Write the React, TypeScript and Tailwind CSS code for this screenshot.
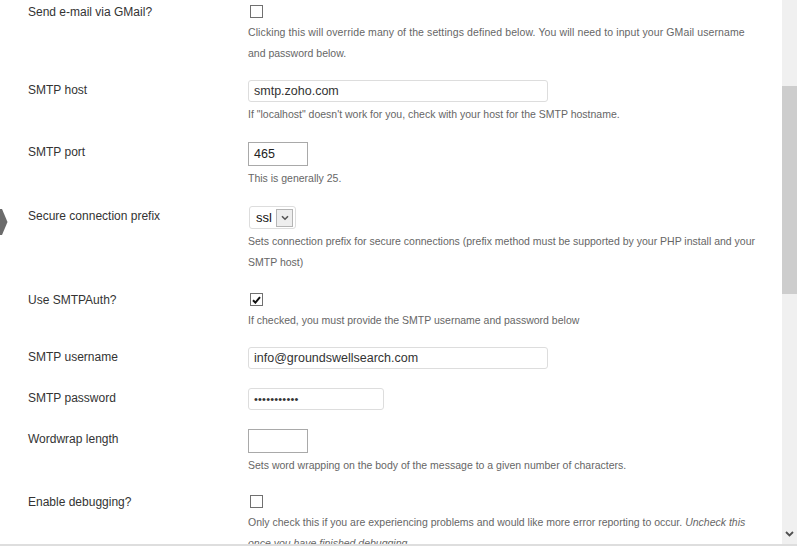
import React from "react";

function Checkbox({ checked = false }: { checked?: boolean }) {
  return (
    <div className="mt-[3px] ml-[2px] w-[13px] h-[13px] border border-[#707070] bg-white flex items-center justify-center">
      {checked && (
        <svg width="9" height="8" viewBox="0 0 9 8">
          <path d="M1 4.2 L3.4 6.6 L8 1.2" fill="none" stroke="#111" strokeWidth="2" />
        </svg>
      )}
    </div>
  );
}

function TextBox({ value, width }: { value?: string; width: string }) {
  return (
    <div className={`${width} h-[22px] border border-[#dddddd] rounded-[3px] bg-white pl-[5px] flex items-center text-[12.5px] text-[#333]`}>
      {value}
    </div>
  );
}

function SmallBox({ value }: { value?: string }) {
  return (
    <div className="w-[60px] h-[24px] border border-[#a9a9a9] bg-white pl-[5px] flex items-center text-[12.5px] text-[#222]">
      {value}
    </div>
  );
}

function Desc({ children, mt = "mt-[2px]" }: { children: React.ReactNode; mt?: string }) {
  return <div className={`${mt} text-[10.5px] leading-[21px] text-[#666] whitespace-nowrap`}>{children}</div>;
}

function Row({ label, mt, children }: { label: string; mt: string; children: React.ReactNode }) {
  return (
    <div className={`flex ${mt}`}>
      <div className="w-[220px] shrink-0 text-[12px] leading-[20px] text-[#333]">{label}</div>
      <div className="flex flex-col">{children}</div>
    </div>
  );
}

export default function App() {
  return (
    <div className="relative w-[797px] h-[546px] overflow-hidden bg-white font-['Liberation_Sans',Arial,sans-serif] flex flex-col">
      <div className="flex h-[544px] overflow-hidden">
        <div className="flex-1 pl-[28px] pt-[2px]">
          <Row label="Send e-mail via GMail?" mt="mt-0">
            <Checkbox />
            <Desc mt="mt-[4px]">
              <span className="tracking-[0.1px]">
                Clicking this will override many of the settings defined below. You will need to input your GMail username
              </span>
              <br />
              and password below.
            </Desc>
          </Row>

          <Row label="SMTP host" mt="mt-[16px]">
            <TextBox value="smtp.zoho.com" width="w-[300px]" />
            <Desc>If "localhost" doesn't work for you, check with your host for the SMTP hostname.</Desc>
          </Row>

          <Row label="SMTP port" mt="mt-[17px]">
            <SmallBox value="465" />
            <Desc>This is generally 25.</Desc>
          </Row>

          <Row label="Secure connection prefix" mt="mt-[17px]">
            <div className="ml-[1px] w-[47px] h-[23px] border border-[#dddddd] rounded-[3px] bg-white flex items-center justify-between pl-[6px] pr-[2px]">
              <span className="text-[13px] text-[#111]">ssl</span>
              <div className="w-[17px] h-[18px] border border-[#b5b5b5] bg-[#eeeeee] flex items-center justify-center">
                <svg width="8" height="6" viewBox="0 0 8 6">
                  <path d="M1 1.2 L4 4.2 L7 1.2" fill="none" stroke="#555" strokeWidth="1.6" />
                </svg>
              </div>
            </div>
            <Desc>
              Sets connection prefix for secure connections (prefix method must be supported by your PHP install and your
              <br />
              SMTP host)
            </Desc>
          </Row>

          <Row label="Use SMTPAuth?" mt="mt-[17px]">
            <Checkbox checked />
            <Desc mt="mt-[4px]">If checked, you must provide the SMTP username and password below</Desc>
          </Row>

          <Row label="SMTP username" mt="mt-[16px]">
            <TextBox value="info@groundswellsearch.com" width="w-[300px]" />
          </Row>

          <Row label="SMTP password" mt="mt-[19px]">
            <div className="w-[136px] h-[22px] border border-[#dddddd] rounded-[3px] bg-white pl-[5px] flex items-center text-[11px] text-[#333] tracking-[0.2px]">
              •••••••••••
            </div>
          </Row>

          <Row label="Wordwrap length" mt="mt-[19px]">
            <SmallBox />
            <Desc>Sets word wrapping on the body of the message to a given number of characters.</Desc>
          </Row>

          <Row label="Enable debugging?" mt="mt-[16px]">
            <Checkbox />
            <Desc mt="mt-[4px]">
              Only check this if you are experiencing problems and would like more error reporting to occur.{" "}
              <i>Uncheck this</i>
              <br />
              <i>once you have finished debugging.</i>
            </Desc>
          </Row>
        </div>

        <div className="w-[15px] shrink-0 bg-[#f0f0f0] flex flex-col">
          <div className="h-[86px]" />
          <div className="h-[208px] bg-[#cdcdcd]" />
          <div className="flex-1" />
          <div className="h-[20px] flex items-center justify-center">
            <svg width="9" height="6" viewBox="0 0 9 6">
              <path d="M1 1 L4.5 4.5 L8 1" fill="none" stroke="#505050" strokeWidth="1.8" />
            </svg>
          </div>
        </div>
      </div>
      <div className="h-[2px] bg-[#dedede]" />

      <svg className="absolute left-0 top-[209px]" width="8" height="26" viewBox="0 0 8 26">
        <polygon points="0,0 2,0 7.5,13 2,26 0,26" fill="#6b6b6b" />
      </svg>
    </div>
  );
}
